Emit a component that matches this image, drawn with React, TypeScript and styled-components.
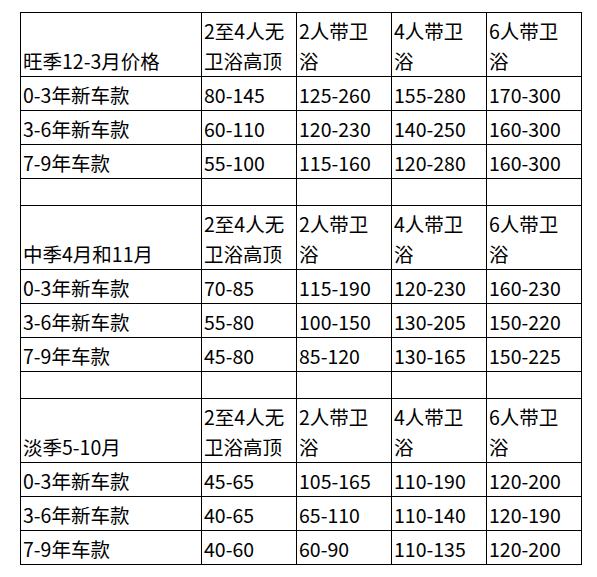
import React from 'react';
import styled, { createGlobalStyle } from 'styled-components';

const GlobalStyle = createGlobalStyle`
    html, body {
        margin: 0;
        padding: 0;
        background: #fff;
    }
`;

const Page = styled.div`
    padding: 12px 0 0 20px;
    font-family: "Noto Sans CJK SC", "Noto Sans", sans-serif;
    color: #000;
`;

const Table = styled.table`
    border-collapse: collapse;
    table-layout: fixed;
    width: 562px;
`;

const Col = styled.col<{ $w: number }>`
    width: ${({ $w }) => $w}px;
`;

const Row = styled.tr<{ $h: number }>`
    height: ${({ $h }) => $h}px;
`;

const Cell = styled.td`
    border: 1px solid #000;
    padding: 0 0 0 2px;
    vertical-align: bottom;
    font-size: 19.5px;
    line-height: 30px;
    white-space: nowrap;
    overflow: hidden;
`;

type Season = {
    title: string;
    rows: [string, string, string, string, string][];
};

const seasons: Season[] = [
    {
        title: '旺季12-3月价格',
        rows: [
            ['0-3年新车款', '80-145', '125-260', '155-280', '170-300'],
            ['3-6年新车款', '60-110', '120-230', '140-250', '160-300'],
            ['7-9年车款', '55-100', '115-160', '120-280', '160-300'],
        ],
    },
    {
        title: '中季4月和11月',
        rows: [
            ['0-3年新车款', '70-85', '115-190', '120-230', '160-230'],
            ['3-6年新车款', '55-80', '100-150', '130-205', '150-220'],
            ['7-9年车款', '45-80', '85-120', '130-165', '150-225'],
        ],
    },
    {
        title: '淡季5-10月',
        rows: [
            ['0-3年新车款', '45-65', '105-165', '110-190', '120-200'],
            ['3-6年新车款', '40-65', '65-110', '110-140', '120-190'],
            ['7-9年车款', '40-60', '60-90', '110-135', '120-200'],
        ],
    },
];

const headers: [string, string][] = [
    ['2至4人无', '卫浴高顶'],
    ['2人带卫', '浴'],
    ['4人带卫', '浴'],
    ['6人带卫', '浴'],
];

export default function App() {
    return (
        <Page>
            <GlobalStyle />
            <Table>
                <colgroup>
                    <Col $w={181} />
                    <Col $w={95} />
                    <Col $w={95} />
                    <Col $w={95} />
                    <Col $w={95} />
                </colgroup>
                <tbody>
                    {seasons.map((season, si) => (
                        <React.Fragment key={si}>
                            {si > 0 && (
                                <Row $h={27}>
                                    {[0, 1, 2, 3, 4].map((c) => (
                                        <Cell key={c} />
                                    ))}
                                </Row>
                            )}
                            <Row $h={64}>
                                <Cell>{season.title}</Cell>
                                {headers.map(([a, b], hi) => (
                                    <Cell key={hi}>
                                        {a}
                                        <br />
                                        {b}
                                    </Cell>
                                ))}
                            </Row>
                            {season.rows.map((row, ri) => (
                                <Row $h={34} key={ri}>
                                    {row.map((v, ci) => (
                                        <Cell key={ci}>{v}</Cell>
                                    ))}
                                </Row>
                            ))}
                        </React.Fragment>
                    ))}
                </tbody>
            </Table>
        </Page>
    );
}
